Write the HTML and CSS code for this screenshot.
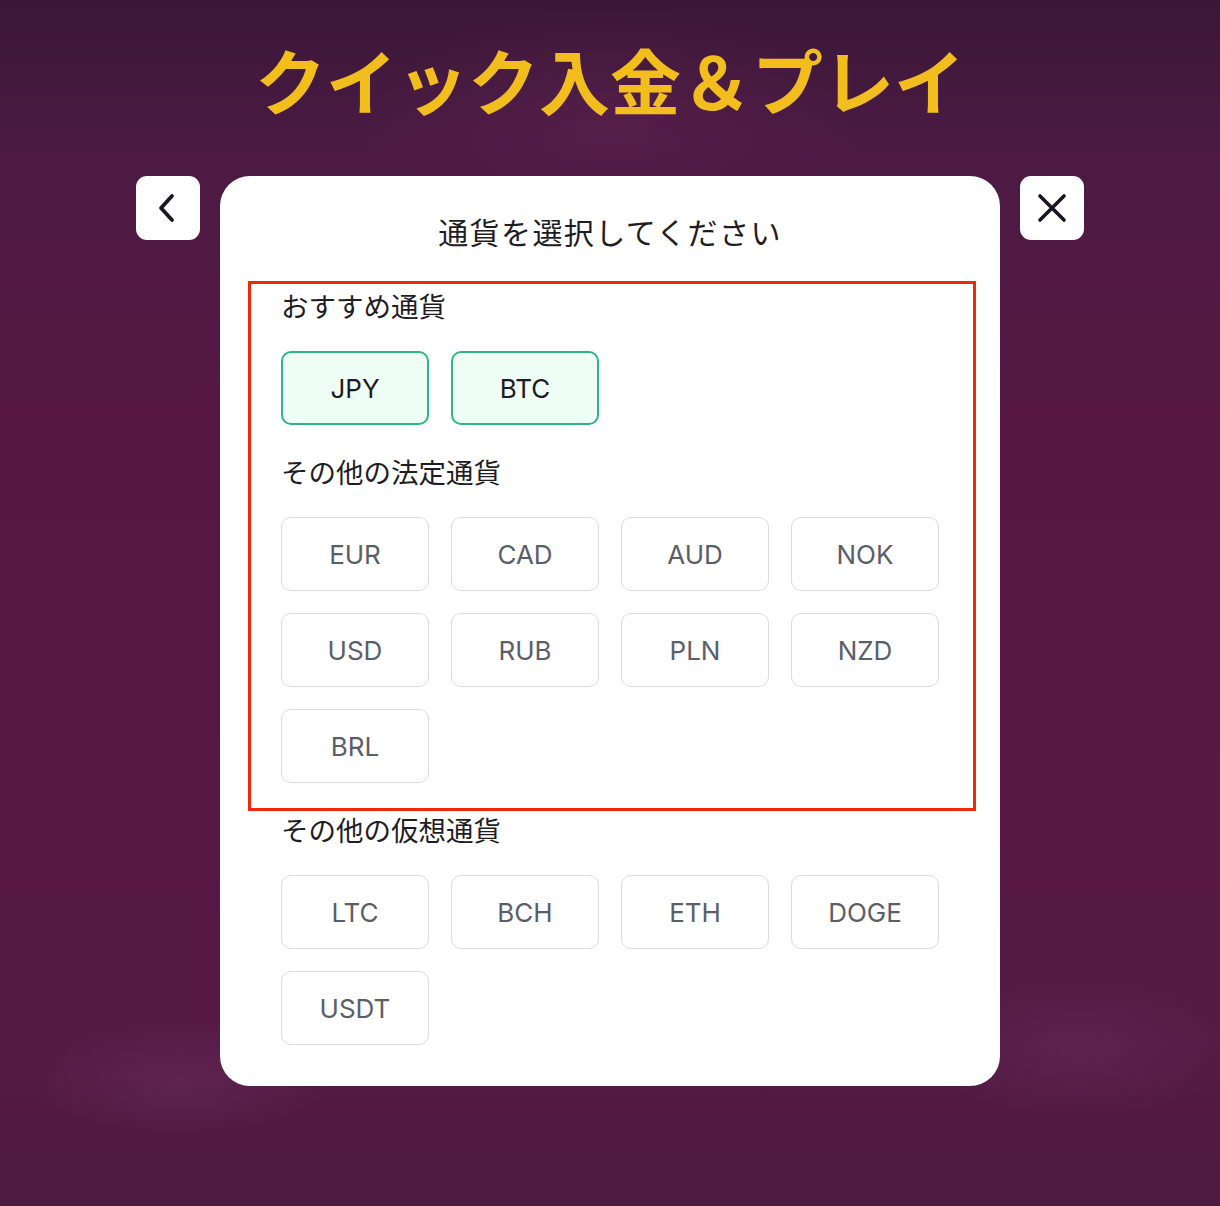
FILE: index.html
```html
<!DOCTYPE html>
<html lang="ja">
<head>
    <meta charset="UTF-8">
    <title>クイック入金＆プレイ</title>
    <link rel="stylesheet" href="styles.css">
</head>
<body>
    <div class="page">
        <h1 class="headline">クイック入金＆プレイ</h1>

        <div class="stage">
            <button class="square-btn" aria-label="戻る">
                <svg width="32" height="32" viewBox="0 0 32 32" fill="none">
                    <path d="M20 4 L9 16 L20 28" stroke="#1b1523" stroke-width="3.8" stroke-linecap="round" stroke-linejoin="round"/>
                </svg>
            </button>

            <div class="modal">
                <h2 class="modal-title">通貨を選択してください</h2>

                <div class="highlight">
                    <div class="section">
                        <div class="section-label">おすすめ通貨</div>
                        <div class="currency-grid">
                            <button class="currency recommended">JPY</button>
                            <button class="currency recommended">BTC</button>
                        </div>
                    </div>

                    <div class="section">
                        <div class="section-label">その他の法定通貨</div>
                        <div class="currency-grid">
                            <button class="currency">EUR</button>
                            <button class="currency">CAD</button>
                            <button class="currency">AUD</button>
                            <button class="currency">NOK</button>
                            <button class="currency">USD</button>
                            <button class="currency">RUB</button>
                            <button class="currency">PLN</button>
                            <button class="currency">NZD</button>
                            <button class="currency">BRL</button>
                        </div>
                    </div>
                </div>

                <div class="section">
                    <div class="section-label">その他の仮想通貨</div>
                    <div class="currency-grid">
                        <button class="currency">LTC</button>
                        <button class="currency">BCH</button>
                        <button class="currency">ETH</button>
                        <button class="currency">DOGE</button>
                        <button class="currency">USDT</button>
                    </div>
                </div>
            </div>

            <button class="square-btn" aria-label="閉じる">
                <svg width="32" height="32" viewBox="0 0 32 32" fill="none">
                    <path d="M4 4 L28 28 M28 4 L4 28" stroke="#1b1523" stroke-width="3.6" stroke-linecap="round"/>
                </svg>
            </button>
        </div>
    </div>
</body>
</html>
```

FILE: styles.css
```css
html, body {
    margin: 0;
    padding: 0;
}

body {
    min-height: 1206px;
    font-family: "Noto Sans CJK JP", "Noto Sans", sans-serif;
    background:
        radial-gradient(ellipse 220px 80px at 180px 1080px, rgba(120, 60, 110, 0.30), transparent 70%),
        radial-gradient(ellipse 220px 100px at 1080px 1050px, rgba(120, 60, 110, 0.25), transparent 70%),
        radial-gradient(ellipse 360px 160px at 610px 120px, rgba(110, 40, 90, 0.30), transparent 70%),
        linear-gradient(180deg, #3a1737 0%, #4b1a43 12%, #561843 35%, #581844 60%, #561a45 85%, #4d1a41 100%);
}

.page {
    display: flex;
    flex-direction: column;
    align-items: center;
    padding-top: 35px;
}

.headline {
    margin: 0;
    height: 86px;
    line-height: 86px;
    font-size: 71px;
    font-weight: 700;
    color: #f2be1d;
}

.stage {
    display: flex;
    align-items: flex-start;
    gap: 20px;
    margin-top: 55px;
}

.square-btn {
    width: 64px;
    height: 64px;
    border: none;
    border-radius: 11px;
    background: #ffffff;
    display: flex;
    align-items: center;
    justify-content: center;
    padding: 0;
    cursor: pointer;
}

.modal {
    width: 780px;
    box-sizing: border-box;
    background: #ffffff;
    border-radius: 30px;
    padding: 35px 61px 41px;
}

.modal-title {
    margin: 0 0 37px;
    text-align: center;
    font-size: 30px;
    line-height: 40px;
    font-weight: 400;
    letter-spacing: 1.4px;
    color: #1f1d24;
}

.highlight {
    position: relative;
}

.highlight::after {
    content: '';
    position: absolute;
    top: -7px;
    left: -33px;
    right: -37px;
    bottom: -28px;
    border: 3.5px solid #f0290b;
    pointer-events: none;
}

.section + .section,
.highlight + .section {
    margin-top: 29px;
}

.section-label {
    font-size: 27.5px;
    line-height: 34px;
    color: #1f1d24;
}

.currency-grid {
    display: grid;
    grid-template-columns: repeat(4, 148px);
    grid-auto-rows: 74px;
    gap: 22px;
    margin-top: 29px;
}

.currency {
    box-sizing: border-box;
    border: 1.5px solid #dcdcdf;
    border-radius: 10px;
    background: #ffffff;
    font-family: "Inter", "Roboto", sans-serif;
    font-size: 26px;
    color: #5a5e69;
    cursor: pointer;
    padding: 0;
}

.currency.recommended {
    border: 2px solid #2fb487;
    background: #eefdf5;
    color: #1c1b22;
}
```
